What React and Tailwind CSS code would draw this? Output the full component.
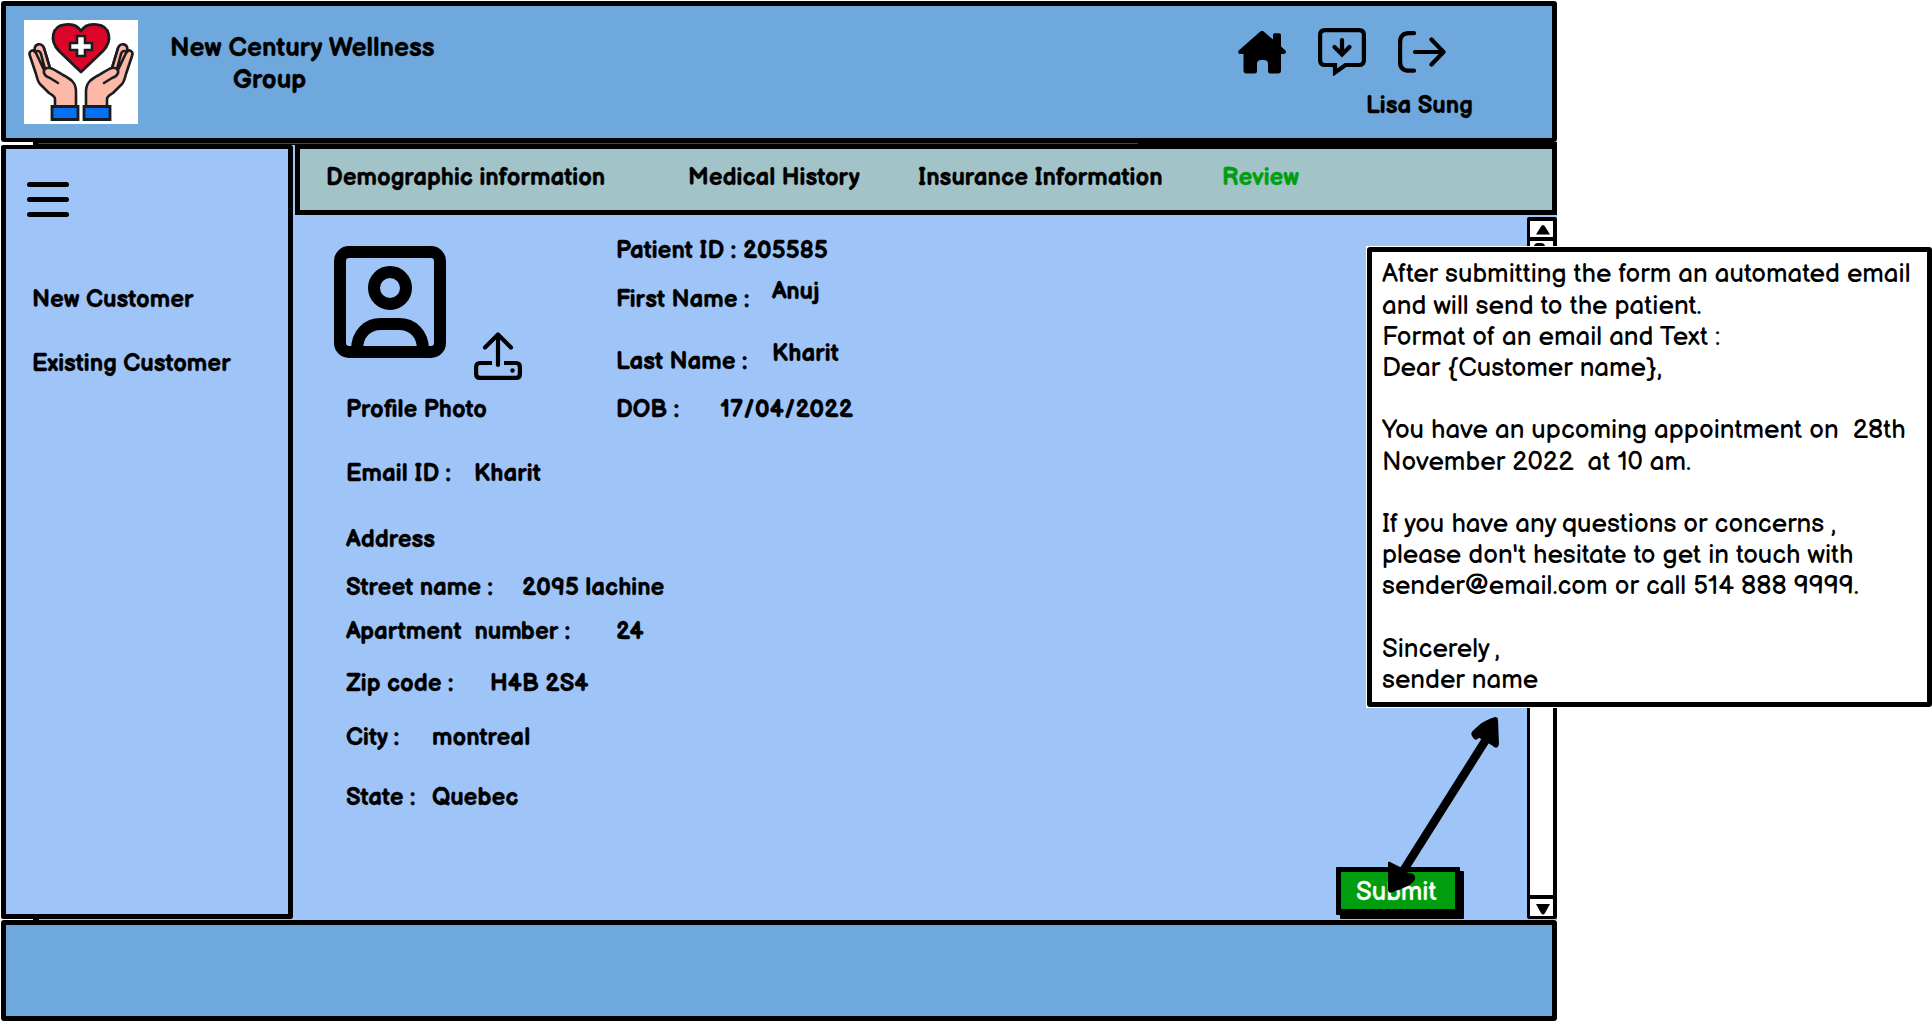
const BODY = "text-[24px] leading-[36px] font-bold [-webkit-text-stroke:0.3px]";

function Label({ w, className = "h-[30px]", children }) {
  return (
    <div className={"shrink-0 whitespace-pre " + className} style={{ width: w }}>
      {children}
    </div>
  );
}

function Hand({ flip }) {
  return (
    <g transform={flip ? "translate(114 0) scale(-1 1)" : undefined} stroke="#1c1c20" strokeWidth="2.6" strokeLinejoin="round" strokeLinecap="round">
      <path
        fill="#fdb9a8"
        d="M31 87 V79 C31 76 28 75 25 73 L16 64 C14 62 13 58 12 54 L6 36 C4 31 9 29 11 32 C9 23 18 22 20 28 L26 48 C30 49 34 52 39 55 C47 59 52 63 52 71 V87 Z"
      />
      <path fill="none" d="M12 33 L20 50 M20 28 L26 48 C22 47 19 50 20 53 C21 56 23 57 26 58 L34 63 M11 32 C14 30 16 31 17 34 L21 49" />
    </g>
  );
}

function Logo() {
  return (
    <svg viewBox="0 0 114 104" className="h-[104px] w-[114px] shrink-0 bg-white">
      <path
        d="M57 52 L35 31 C25 20 28 6 41 4.600 C48 3.500 54 6 57 11 C60 6 66 3.500 73 4.600 C86 6 89 20 79 31 Z"
        fill="#dc0428"
        stroke="#1c1c20"
        strokeWidth="2.800"
        strokeLinejoin="round"
      />
      <path d="M53 16 h8 v7 h7 v7 h-7 v6 h-8 v-6 h-7 v-7 h7 Z" fill="#fff" stroke="#1c1c20" strokeWidth="2.600" />
      <Hand />
      <Hand flip />
      <path d="M28 86.500 h26 v13 h-26 Z M60 86.500 h26 v13 h-26 Z" fill="#0471f2" stroke="#1c1c20" strokeWidth="2.800" />
    </svg>
  );
}

function HomeIcon() {
  return (
    <svg viewBox="0 0 48 48" className="size-12">
      <path d="M24 3 C25 3 25.500 3.400 26.300 4 L35 11.500 V7 Q35 5.300 36.700 5.300 H41 Q43 5.300 43 7 V18.500 L47.200 22.300 C49 24.500 47.500 26 45.500 26 H43 V42.500 Q43 45.500 40 45.500 H32.500 Q30 45.500 30 43 V36 Q30 32 26 32 H23 Q19 32 19 36 V43 Q19 45.500 16.500 45.500 H8.500 Q5.500 45.500 5.500 42.500 V26 H2.500 C.5 26 -.8 24.500 1 22.300 L21.700 4 C22.500 3.400 23 3 24 3 Z" />
    </svg>
  );
}

function MessageIcon() {
  return (
    <svg viewBox="0 0 48 48" className="size-12" fill="none" stroke="#000" strokeWidth="4.2" strokeLinecap="round">
      <path d="M7 2.100 H41 Q45.900 2.100 45.900 7 V32 Q45.900 37 41 37 H27.500 L17 44.500 V37 H7 Q2.100 37 2.100 32 V7 Q2.100 2.100 7 2.100 Z" strokeLinecap="butt" />
      <path d="M24 12 V26 M16.500 19 L24 26.500 L31.500 19" />
    </svg>
  );
}

function LogoutIcon() {
  return (
    <svg viewBox="0 0 48 48" className="size-12" fill="none" stroke="#000" strokeWidth="4.2" strokeLinecap="round" strokeLinejoin="round">
      <path d="M16 5.200 H11 Q2.100 5.200 2.100 14 V34 Q2.100 42.700 11 42.700 H16 M17 24 H45.500 M33.500 11.500 L45.500 24 L33.500 36.500" />
    </svg>
  );
}

function ProfileIcon() {
  return (
    <svg viewBox="0 0 112 112" className="size-28 shrink-0" fill="none" stroke="#000" strokeWidth="12">
      <rect x="6" y="6" width="100" height="100" rx="9" />
      <circle cx="56" cy="42" r="16" />
      <path d="M23 104 C23 87 34 78 47 78 H65 C78 78 89 87 89 104" />
    </svg>
  );
}

function UploadIcon() {
  return (
    <svg viewBox="0 0 48 48" className="size-12 shrink-0" fill="none" stroke="#000" strokeWidth="4.2" strokeLinecap="round" strokeLinejoin="round">
      <path d="M24 33 V3 M11 15.500 L24 2.500 L37 15.500" />
      <path d="M18 31 H6 Q2.100 31 2.100 35 V42 Q2.100 45.900 6 45.900 H42 Q45.900 45.900 45.900 42 V35 Q45.900 31 42 31 H30" strokeLinecap="butt" />
      <circle cx="38.500" cy="38.500" r="2.200" fill="#000" stroke="none" />
    </svg>
  );
}

function Header() {
  return (
    <header className="ml-[1px] flex h-[141px] w-[1556px] rounded-[3px] border-[5px] border-b-4 border-black bg-[#6fa8dc]">
      <div className="mt-[14px] ml-[18px]">
        <Logo />
      </div>
      <div className="mt-[25px] ml-8 text-[26px] leading-[35px] font-bold [-webkit-text-stroke:0.3px]">
        <Label w={264}>New Century Wellness</Label>
        <Label w={73} className="mt-[2px] ml-[63px] h-[30px]">Group</Label>
      </div>
      <div className="mt-[22px] ml-auto mr-[79px] w-[235px]">
        <div className="flex gap-8">
          <HomeIcon />
          <MessageIcon />
          <LogoutIcon />
        </div>
        <Label w={107} className={"mt-3 ml-32 h-[30px] " + BODY}>Lisa Sung</Label>
      </div>
    </header>
  );
}

function Sidebar() {
  return (
    <aside className="ml-[1px] h-[774px] w-[292px] shrink-0 rounded-[2px] border-[5px] border-t-4 border-black bg-[#9fc5f8]">
      <div className="mt-[33px] ml-[21px] flex w-[42px] flex-col gap-[10.5px]">
        <div className="h-[4.5px] rounded-full bg-black" />
        <div className="h-[4.5px] rounded-full bg-black" />
        <div className="h-[4.5px] rounded-full bg-black" />
      </div>
      <nav className={"mt-[65px] ml-[26px] " + BODY}>
        <Label w={162}>New Customer</Label>
        <Label w={199} className="mt-[34px] h-[30px]">Existing Customer</Label>
      </nav>
    </aside>
  );
}

function Tabs() {
  return (
    <nav className={"ml-[2px] flex h-[70px] border-t-4 border-r-[5px] border-b-[5px] border-l-[5px] border-black bg-[#a2c4c9] pt-[11px] " + BODY}>
      <Label w={279} className="ml-[26px]">Demographic information</Label>
      <Label w={172} className="ml-[83px]">Medical History</Label>
      <Label w={245} className="ml-[58px]">Insurance Information</Label>
      <Label w={77} className="ml-[59px] text-[#009e0f]">Review</Label>
    </nav>
  );
}

function Row({ className, label, labelWidth, value, valueWidth, valueClass = "" }) {
  return (
    <div className={"flex h-[30px] " + className}>
      <Label w={labelWidth}>{label}</Label>
      {value && (
        <Label w={valueWidth} className={valueClass}>
          {value}
        </Label>
      )}
    </div>
  );
}

function Details() {
  return (
    <div className={"w-[1234px] shrink-0 " + BODY}>
      <div className="flex h-[207px]">
        <div className="w-[323px]">
          <div className="mt-[31px] ml-[41px] flex h-[134px] items-start gap-7">
            <ProfileIcon />
            <div className="mt-[86px]">
              <UploadIcon />
            </div>
          </div>
          <Label w={141} className="mt-3 ml-[53px] h-[30px]">Profile Photo</Label>
        </div>
        <div>
          <Row className="mt-[18px]" label="Patient ID : 205585" labelWidth={212} />
          <Row className="mt-[19px]" label="First Name :" labelWidth={134} value="Anuj" valueWidth={48} valueClass="ml-[22px] -mt-2" />
          <Row className="mt-8" label="Last Name :" labelWidth={132} value="Kharit" valueWidth={67} valueClass="ml-6 -mt-2" />
          <Row className="mt-[18px]" label="DOB :" labelWidth={63} value="17/04/2022" valueWidth={134} valueClass="ml-[41px]" />
        </div>
      </div>
      <div className="ml-[53px]">
        <Row className="mt-[34px]" label="Email ID :" labelWidth={106} value="Kharit" valueWidth={67} valueClass="ml-[22px]" />
        <Row className="mt-9" label="Address" labelWidth={89} />
        <Row className="mt-[18px]" label="Street name :" labelWidth={148} value="2095 lachine" valueWidth={143} valueClass="ml-7" />
        <Row className="mt-[14px]" label="Apartment  number :" labelWidth={225} value="24" valueWidth={28} valueClass="ml-[45px]" />
        <Row className="mt-[22px]" label="Zip code :" labelWidth={108} value="H4B 2S4" valueWidth={98} valueClass="ml-9" />
        <Row className="mt-6" label="City :" labelWidth={54} value="montreal" valueWidth={98} valueClass="ml-8" />
        <Row className="mt-[30px]" label="State :" labelWidth={70} value="Quebec" valueWidth={87} valueClass="ml-4" />
      </div>
      <button className="mt-[57px] ml-[1043px] block h-[48px] w-[124px] rounded-[1px] border-[5px] border-b-[6px] border-black bg-[#009e0f] pl-[15px] text-left text-[26px] leading-[39px] font-normal text-white shadow-[4px_4px_0_#000]">
        <Label w={80} className="h-[36px]">Submit</Label>
      </button>
    </div>
  );
}

function Scrollbar() {
  return (
    <div className="mt-[2px] flex h-[702px] w-[30px] shrink-0 flex-col rounded-[2px] border-t-4 border-r-4 border-b-[3px] border-l-[3px] border-black bg-white">
      <div className="flex h-[20px] items-center justify-center border-b-[4px] border-black pl-[2px]">
        <svg viewBox="0 0 14 10" className="h-[11px] w-[14px]">
          <path d="M0 10 L5 2 Q7 -1 9 2 L14 10 Z" />
        </svg>
      </div>
      <div className="mr-2 ml-1 mt-[2px] h-9 rounded bg-black" />
      <div className="mt-auto flex h-[21px] items-center justify-center border-t-[4px] border-black pt-[3px] pl-[2px]">
        <svg viewBox="0 0 14 11" className="h-[11px] w-[14px]">
          <path d="M0 0 H14 L9 9 Q7 12 5 9 Z" />
        </svg>
      </div>
    </div>
  );
}

const NOTE = [
  "After submitting the form an automated email",
  "and will send to the patient.",
  "Format of an email and Text :",
  "Dear {Customer name},",
  "",
  "You have an upcoming appointment on  28th",
  "November 2022  at 10 am.",
  "",
  "If you have any questions or concerns ,",
  "please don't hesitate to get in touch with",
  "sender@email.com or call 514 888 9999.",
  "",
  "Sincerely ,",
  "sender name",
];

function Note() {
  return (
    <div className="absolute top-[246px] left-[1366px] bg-white pb-[1px]">
      <div className="mt-[1px] ml-[1px] h-[460px] w-[565px] rounded-[3px] border-[5px] border-black bg-white pt-[7.4px] pl-[10px] text-[26px] leading-[31.2px] tracking-[0.02px]">
        {NOTE.map((line, i) => (
          <p key={i} className="h-[31.2px] whitespace-pre">
            {line}
          </p>
        ))}
      </div>
    </div>
  );
}

function Arrow() {
  return (
    <svg viewBox="0 0 120 180" className="absolute top-[715px] left-[1380px] h-[180px] w-[120px]">
      <path d="M107 23 L20 161" stroke="#000" strokeWidth="8.500" />
      <path d="M115 2 C117 2 118 3 118 5 L119 29 C118 34 115 33 113 31 L108 28 L103 27 L100 23 C97 23 96 28 92 21 C90 17 93 16 97 12 C102 7 108 4 115 2 Z" />
      <path d="M8 148 C8 146 10 147 12 148 L20 152 L25 157 L29 158 C34 158 37 162 34 166 C30 171 21 174 13 177 C8 179 8 176 8 172 Z" />
    </svg>
  );
}

export default function App() {
  return (
    <div className="relative h-[1022px] w-[1932px] overflow-hidden bg-white pt-[1px] font-['Balsamiq_Sans',Lato,sans-serif] text-black">
      <Header />
      <div className="ml-[33px] flex h-[3px] w-[1524px] items-center bg-black">
        <div className="ml-[5px] h-px w-[1100px] bg-[#444]" />
      </div>
      <div className="flex h-[774px] w-[1557px]">
        <Sidebar />
        <main className="flex grow flex-col bg-[#9fc5f8]">
          <Tabs />
          <div className="flex grow">
            <Details />
            <Scrollbar />
          </div>
        </main>
      </div>
      <div className="ml-[33px] h-px w-[1524px] border-l-[6px] border-black bg-[#9fc5f8]" />
      <footer className="ml-[1px] h-[101px] w-[1556px] rounded-[3px] border-[5px] border-black bg-[#6fa8dc]" />
      <Note />
      <Arrow />
    </div>
  );
}
